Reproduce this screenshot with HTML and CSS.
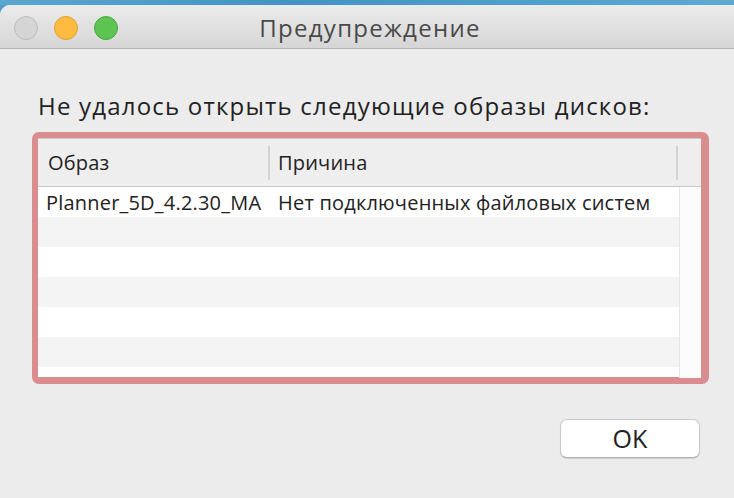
FILE: index.html
```html
<!DOCTYPE html>
<html lang="ru">
<head>
    <meta charset="utf-8">
    <title>Предупреждение</title>
    <link rel="stylesheet" href="styles.css">
</head>
<body>
    <div class="desktop-strip"></div>
    <div class="window">
        <header class="titlebar">
            <div class="lights">
                <span class="light light-close"></span>
                <span class="light light-min"></span>
                <span class="light light-max"></span>
            </div>
            <h1 class="title">Предупреждение</h1>
        </header>
        <main class="content">
            <p class="label">Не удалось открыть следующие образы дисков:</p>
            <div class="focus-ring">
                <div class="table">
                    <div class="table-head">
                        <div class="th th-image">Образ</div>
                        <div class="th th-reason">Причина</div>
                        <div class="th th-corner"></div>
                    </div>
                    <div class="table-body">
                        <div class="rows">
                            <div class="row">
                                <div class="td td-image">Planner_5D_4.2.30_MA</div>
                                <div class="td td-reason">Нет подключенных файловых систем</div>
                            </div>
                            <div class="row"></div>
                            <div class="row"></div>
                            <div class="row"></div>
                            <div class="row"></div>
                            <div class="row"></div>
                            <div class="row"></div>
                        </div>
                        <div class="gutter"></div>
                    </div>
                </div>
            </div>
            <div class="actions">
                <button class="btn-ok">OK</button>
            </div>
        </main>
    </div>
</body>
</html>
```

FILE: styles.css
```css
/* Dialog window */
body {
    margin: 0;
    padding: 0;
    width: 734px;
    height: 498px;
    overflow: hidden;
    background-color: #4f9dc6;
    font-family: "Open Sans", "Liberation Sans", sans-serif;
}

.desktop-strip {
    height: 5px;
    background: linear-gradient(to right, #5aa6cf, #3f95c4 40%, #5aaad2);
}

.window {
    height: 493px;
    background-color: #ececec;
    border-top-left-radius: 10px;
    overflow: hidden;
}

.titlebar {
    height: 43px;
    border-bottom: 1px solid #b3b3b3;
    background: linear-gradient(to bottom, #ebebeb, #d6d6d6);
    display: flex;
    align-items: center;
}

.lights {
    display: flex;
    gap: 16px;
    padding-left: 14px;
    padding-top: 3px;
}

.light {
    width: 24px;
    height: 24px;
    border-radius: 50%;
    box-sizing: border-box;
}

.light-close {
    background-color: #d5d5d5;
    border: 1px solid #bdbdbd;
}

.light-min {
    background-color: #fdbc40;
    border: 1px solid #e0a030;
}

.light-max {
    background-color: #5ec451;
    border: 1px solid #49a83e;
}

.title {
    flex: 1;
    margin: 0;
    padding-right: 112px;
    padding-top: 3px;
    text-align: center;
    font-size: 24px;
    line-height: 30px;
    letter-spacing: 1.3px;
    font-weight: normal;
    color: #4a4a4a;
}

.content {
    padding: 0 25px 0 32px;
}

.label {
    margin: 0;
    padding: 42px 0 0 6px;
    height: 41px;
    font-size: 24px;
    line-height: 30px;
    letter-spacing: 1.2px;
    color: #222;
    white-space: nowrap;
}

.focus-ring {
    width: 677px;
    height: 252px;
    box-sizing: border-box;
    border: 6px solid #d98d8f;
    border-right-width: 8px;
    border-bottom-width: 7px;
    border-radius: 7px;
    background-color: #fff;
}

.table {
    height: 100%;
    border-top: 1px solid #c9c9c9;
    display: flex;
    flex-direction: column;
}

.table-head {
    height: 47px;
    display: flex;
    align-items: center;
    background-color: #eeeeee;
    border-bottom: 1px solid #c8c8c8;
    font-size: 20px;
    letter-spacing: 0.2px;
    color: #222;
}

.th {
    height: 34px;
    line-height: 34px;
    box-sizing: border-box;
}

.th-image {
    width: 232px;
    padding-left: 10px;
    border-right: 2px solid #d3d3d3;
}

.th-reason {
    width: 408px;
    padding-left: 8px;
    border-right: 2px solid #d3d3d3;
}

.th-corner {
    flex: 1;
}

.table-body {
    flex: 1;
    display: flex;
    overflow: hidden;
}

.rows {
    width: 641px;
}

.row {
    height: 30px;
    display: flex;
    align-items: center;
    font-size: 20px;
    letter-spacing: 0.2px;
    color: #222;
}

.row:nth-child(even) {
    background-color: #f4f4f4;
}

.td-image {
    width: 232px;
    padding-left: 8px;
    box-sizing: border-box;
    white-space: nowrap;
}

.td-reason {
    padding-left: 8px;
    white-space: nowrap;
}

.gutter {
    flex: 1;
    border-left: 1px solid #e6e6e6;
    background-color: #fcfcfc;
}

.actions {
    display: flex;
    justify-content: flex-end;
    padding: 35px 9px 0 0;
}

.btn-ok {
    width: 140px;
    height: 39px;
    background-color: #fff;
    border: 1px solid #c9c9c9;
    border-bottom-color: #b0b0b0;
    border-radius: 7px;
    box-shadow: 0 1px 1px rgba(0, 0, 0, 0.12);
    font-family: "Open Sans", "Liberation Sans", sans-serif;
    font-size: 25px;
    line-height: 37px;
    color: #222;
    padding: 0;
}
```
